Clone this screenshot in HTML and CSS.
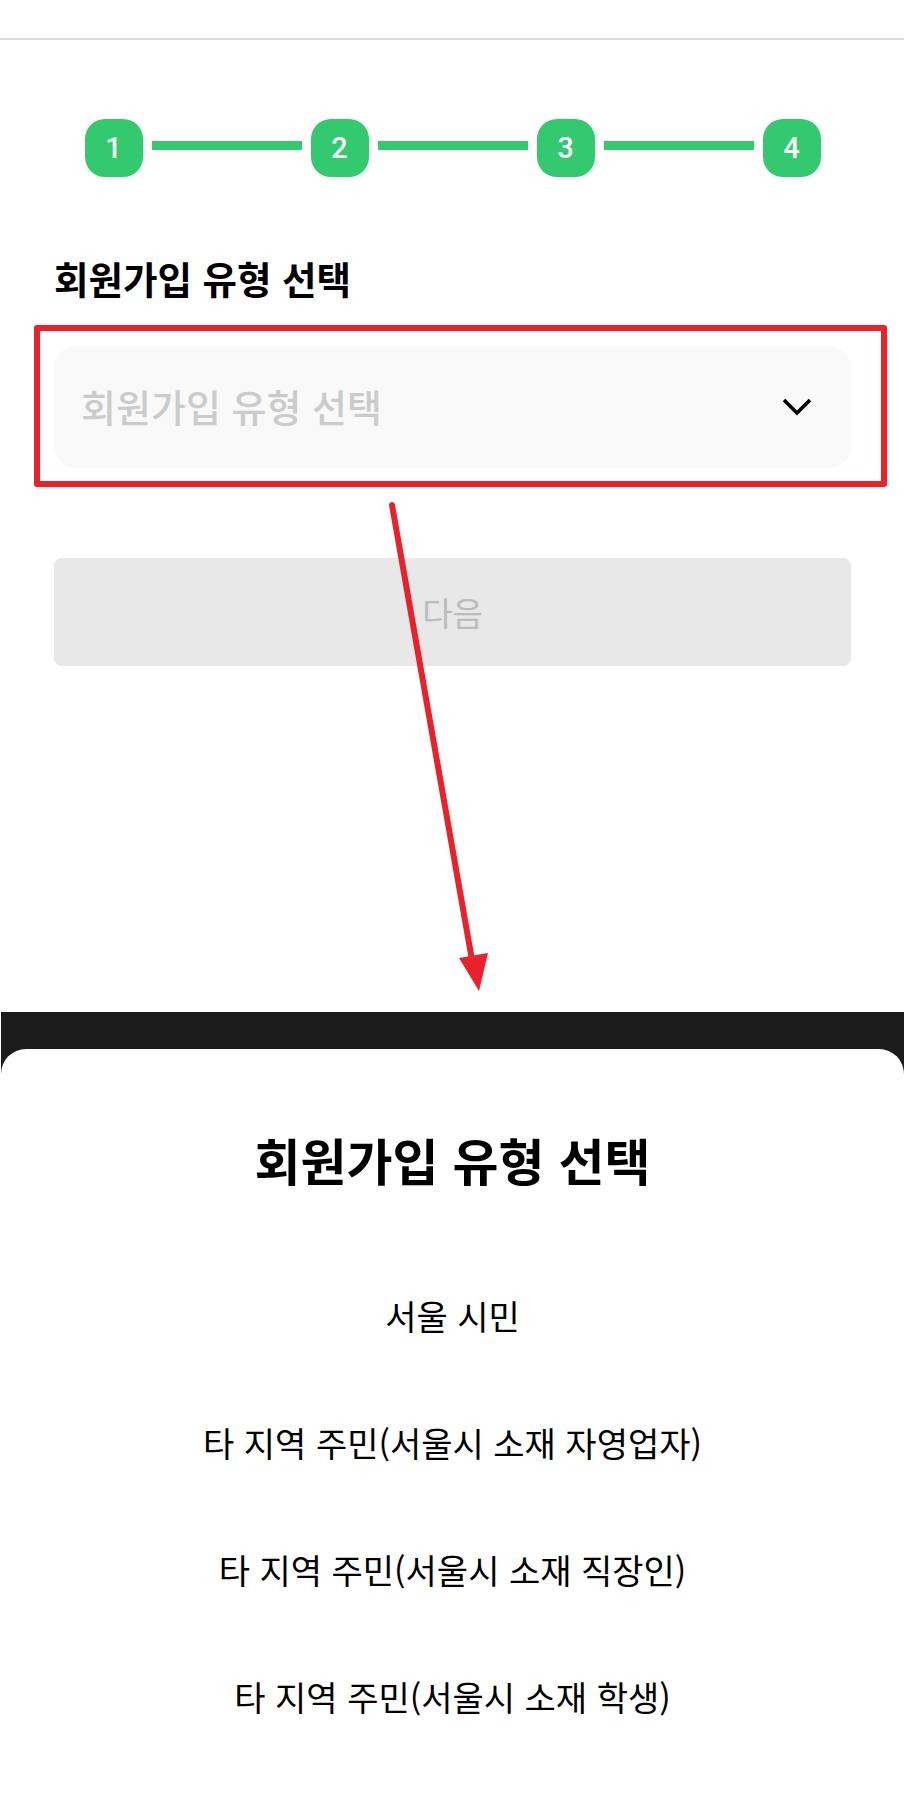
FILE: index.html
```html
<!DOCTYPE html>
<html lang="ko">
<head>
    <meta charset="UTF-8" />
    <meta name="viewport" content="width=device-width, initial-scale=1" />
    <title>회원가입 유형 선택</title>
    <link rel="stylesheet" href="styles.css">
</head>
<body>

    <header class="top-bar"></header>

    <main class="signup">
        <div class="stepper">
            <span class="step">1</span>
            <span class="step-line"></span>
            <span class="step">2</span>
            <span class="step-line"></span>
            <span class="step">3</span>
            <span class="step-line"></span>
            <span class="step">4</span>
        </div>

        <h2 class="field-label">회원가입 유형 선택</h2>

        <div class="select-box">
            <span class="select-placeholder">회원가입 유형 선택</span>
            <svg class="chevron" width="30" height="18" viewBox="0 0 30 18">
                <polyline points="2,2 15,15 28,2" fill="none" stroke="#000" stroke-width="3.6" />
            </svg>
        </div>

        <button class="next-button" disabled>다음</button>
    </main>

    <div class="dim">
        <section class="sheet">
            <h3 class="sheet-title">회원가입 유형 선택</h3>
            <ul class="sheet-list">
                <li>서울 시민</li>
                <li>타 지역 주민(서울시 소재 자영업자)</li>
                <li>타 지역 주민(서울시 소재 직장인)</li>
                <li>타 지역 주민(서울시 소재 학생)</li>
            </ul>
        </section>
    </div>

    <!-- 주석: 강조 박스와 화살표 -->
    <div class="annot-box"></div>
    <svg class="annot-arrow" width="904" height="1000" viewBox="0 0 904 1000">
        <line x1="392" y1="505" x2="472" y2="960" stroke="#e8212b" stroke-width="6" stroke-linecap="round" />
        <polygon points="459,958 488,953 479,991" fill="#e8212b" />
    </svg>

</body>
</html>
```

FILE: styles.css
```css
* {
    box-sizing: border-box;
    margin: 0;
    padding: 0;
}

body {
    font-family: "Noto Sans CJK KR", "Noto Sans", sans-serif;
    background-color: #fff;
    color: #000;
    min-height: 100vh;
    display: flex;
    flex-direction: column;
    position: relative;
}

.top-bar {
    height: 40px;
    border-bottom: 2px solid #dcdcdc;
}

.signup {
    padding: 0 53px 0 54px;
}

.stepper {
    display: flex;
    justify-content: center;
    align-items: center;
    gap: 9px;
    margin-top: 79px;
}

    .stepper .step {
        width: 58px;
        height: 58px;
        border-radius: 20px;
        background-color: #33c96f;
        color: #fff;
        font-family: Roboto, sans-serif;
        font-size: 29px;
        font-weight: 500;
        display: flex;
        justify-content: center;
        align-items: center;
    }

    .stepper .step-line {
        width: 150px;
        height: 9px;
        margin-bottom: 5px;
        background-color: #33c96f;
    }

.field-label {
    margin-top: 77px;
    font-size: 37.5px;
    line-height: 48px;
    font-weight: 700;
}

.select-box {
    margin-top: 44px;
    height: 122px;
    border-radius: 22px;
    background-color: #f9f9f9;
    display: flex;
    align-items: center;
    justify-content: space-between;
    padding: 0 39px 0 27px;
}

.select-placeholder {
    font-size: 38px;
    font-weight: 500;
    color: #cbcbcb;
    margin-top: -4px;
}

.next-button {
    display: block;
    width: 100%;
    height: 108px;
    margin-top: 90px;
    border: none;
    border-radius: 8px;
    background-color: #e8e8e8;
    color: #bcbcbc;
    font-family: inherit;
    font-size: 33px;
    font-weight: 400;
}

/* 바텀시트 */
.dim {
    flex: 1;
    display: flex;
    flex-direction: column;
    margin: 346px 0 0 1px;
    padding-top: 37px;
    background-color: #1b1b1b;
}

.sheet {
    flex: 1;
    background-color: #fff;
    border-radius: 25px 25px 0 0;
    padding-top: 80px;
    text-align: center;
}

    .sheet-title {
        font-size: 50px;
        line-height: 60px;
        font-weight: 700;
    }

    .sheet-list {
        list-style: none;
        margin-top: 63px;
    }

        .sheet-list li {
            height: 127px;
            line-height: 127px;
            font-size: 34px;
        }

.annot-box {
    position: absolute;
    left: 34px;
    top: 325px;
    width: 853px;
    height: 162px;
    border: 6px solid #e8212b;
    border-radius: 3px;
}

.annot-arrow {
    position: absolute;
    left: 0;
    top: 0;
    pointer-events: none;
}
```
